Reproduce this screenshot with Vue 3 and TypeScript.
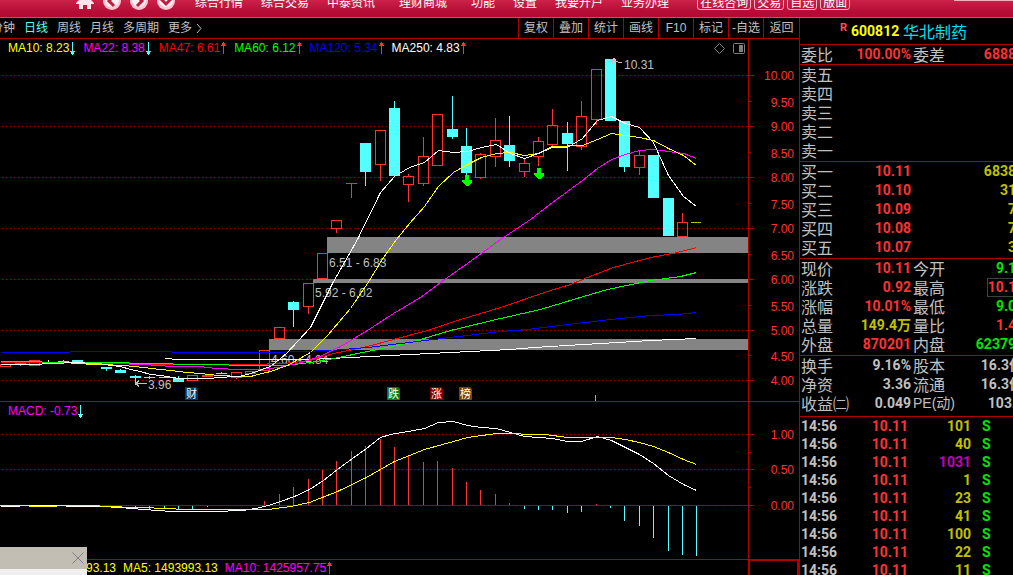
<script setup lang="ts">
type Kind = 'up' | 'down' | 'solid' | 'white'
// left edge, body top, body bottom, high, low, kind
type Candle = [number, number, number, number, number, Kind]

const navItems = [
  { text: '综合行情', wide: false },
  { text: '综合交易', wide: false },
  { text: '中泰资讯', wide: false },
  { text: '理财商城', wide: true },
  { text: '功能', wide: false },
  { text: '设置', wide: false },
  { text: '我要开户', wide: false },
  { text: '业务办理', wide: false },
]
const quickItems = ['在线咨询', '交易', '自选', '版面']
const periods = ['分钟', '日线', '周线', '月线', '多周期', '更多']
const tools = ['复权', '叠加', '统计', '画线', 'F10', '标记', '-自选', '返回']

const averages = [
  { text: 'MA10: 8.23', tone: 'yellow', up: false },
  { text: 'MA22: 8.38', tone: 'magenta', up: false },
  { text: 'MA47: 6.61', tone: 'red', up: true },
  { text: 'MA60: 6.12', tone: 'green', up: true },
  { text: 'MA120: 5.34', tone: 'blue', up: true },
  { text: 'MA250: 4.83', tone: 'white', up: true },
]

const candles: Candle[] = [
  [0, 364, 366, 364, 366, 'up'],
  [15, 363, 363, 362, 365, 'up'],
  [29, 360, 365, 360, 365, 'up'],
  [43, 363, 363, 360, 363, 'white'],
  [58, 361, 361, 360, 361, 'down'],
  [72, 360, 361, 360, 361, 'down'],
  [87, 364, 364, 364, 364, 'down'],
  [101, 367, 368, 367, 370, 'down'],
  [115, 370, 372, 369, 372, 'down'],
  [130, 376, 377, 375, 384, 'down'],
  [144, 377, 377, 376, 378, 'down'],
  [159, 377, 377, 377, 377, 'down'],
  [173, 378, 381, 376, 381, 'down'],
  [187, 375, 380, 375, 380, 'up'],
  [202, 375, 376, 375, 376, 'solid'],
  [216, 373, 373, 372, 373, 'down'],
  [231, 372, 377, 372, 378, 'up'],
  [245, 371, 373, 371, 373, 'up'],
  [259, 350, 370, 350, 370, 'up'],
  [274, 327, 338, 327, 338, 'up'],
  [288, 302, 309, 301, 326, 'down'],
  [303, 283, 306, 283, 313, 'up'],
  [317, 253, 278, 253, 278, 'up'],
  [331, 220, 228, 220, 232, 'up'],
  [346, 183, 183, 183, 197, 'up'],
  [360, 143, 171, 143, 185, 'down'],
  [375, 130, 164, 130, 180, 'up'],
  [389, 108, 175, 101, 176, 'down'],
  [403, 176, 184, 174, 201, 'up'],
  [418, 156, 183, 137, 185, 'up'],
  [432, 114, 165, 114, 165, 'up'],
  [447, 129, 136, 96, 138, 'down'],
  [461, 146, 172, 128, 175, 'down'],
  [475, 154, 177, 153, 178, 'up'],
  [490, 140, 156, 118, 166, 'up'],
  [504, 145, 160, 116, 166, 'down'],
  [519, 163, 171, 158, 176, 'up'],
  [533, 141, 156, 137, 165, 'up'],
  [547, 125, 144, 109, 147, 'up'],
  [562, 133, 143, 122, 170, 'down'],
  [576, 116, 146, 101, 149, 'up'],
  [591, 69, 119, 69, 124, 'up'],
  [605, 59, 120, 59, 120, 'down'],
  [619, 121, 166, 121, 171, 'down'],
  [634, 155, 167, 150, 174, 'up'],
  [648, 155, 197, 155, 197, 'down'],
  [663, 198, 235, 198, 235, 'down'],
  [677, 222, 236, 213, 236, 'up'],
]

const priceLines = [
  { tone: 'white', points: '164,358 171,358 172,359 300,359 330,358 510,349 533,347 617,342 650,340 696,338' },
  { tone: 'red', points: '0,362 41,362 140,363 143,364 250,364 283,363 310,360 333,353 367,346 393,339 427,330 457,320 500,307 550,290 570,284 587,277 613,267 650,257 677,252 696,247' },
  { tone: 'green', points: '0,361 41,361 42,362 128,362 129,363 172,363 173,364 228,364 229,365 285,365 310,362 333,358 367,351 410,342 450,330 500,318 540,309 573,299 607,289 650,280 680,276 696,272' },
  { tone: 'blue', points: '0,352 69,352 70,351 171,351 172,352 270,352 330,350 367,347 433,339 483,333 500,331 527,329 550,326 610,319 650,315 677,314 696,312' },
  { tone: 'magenta', points: '128,364 143,364 172,366 200,366 215,368 240,369 259,369 278,367 297,363 317,357 340,346 367,330 393,313 420,297 440,282 467,263 500,239 530,219 552,202 582,180 597,168 611,159 625,154 639,150 653,149 668,151 683,153 696,158' },
  { tone: 'yellow', points: '71,363 100,364 124,365 143,367 160,369 170,370 186,372 200,373 218,375 240,376 250,376 270,371 287,365 310,352 327,335 350,308 367,283 383,257 396,239 409,223 424,206 438,186 453,172 467,164 481,157 496,153 510,152 524,155 538,153 552,146 582,145 597,139 611,133 639,137 653,140 668,148 683,155 696,165' },
  { tone: 'white', points: '0,364 41,364 42,363 56,363 71,362 98,363 110,365 120,366 130,369 140,371 150,374 160,375 172,377 178,378 212,378 215,377 238,376 243,375 250,373 270,366 286,353 310,327 332,283 357,239 380,192 394,176 409,167 424,162 438,150 453,152 467,151 481,147 496,144 510,153 524,158 538,153 552,147 567,147 582,138 597,120 611,116 625,123 639,127 653,142 668,175 683,196 696,206' },
]

const priceScale = [
  ['10.00', 75], ['9.50', 102], ['9.00', 126], ['8.50', 153], ['8.00', 177], ['7.50', 204], ['7.00', 228],
  ['6.50', 255], ['6.00', 279], ['5.50', 306], ['5.00', 330], ['4.50', 356], ['4.00', 380],
] as [string, number][]
const priceGrid = [75, 126, 177, 228, 279, 330, 380]
const priceMinor = [101, 152, 203, 254, 305, 355]

const badges = [
  { text: '财', x: 185, fill: '#003466' },
  { text: '跌', x: 387, fill: '#008000' },
  { text: '涨', x: 430, fill: '#800000' },
  { text: '榜', x: 459, fill: '#804000' },
]

const macdLines = [
  { tone: 'white', points: '0,506 12,506 28,505 100,506 120,507 143,509 172,511 213,511 243,510 255,508 268,505 280,501 294,496 309,489 323,480 337,469 352,458 366,448 380,437 390,434 408,431 424,428 438,422 453,421 467,425 481,427 496,428 510,432 524,436 552,438 567,441 581,441 597,436 611,440 625,447 639,454 653,463 668,475 683,484 696,490' },
  { tone: 'yellow', points: '0,505 56,506 57,505 99,505 100,506 143,507 186,509 268,509 290,506 309,502 337,491 366,477 380,469 394,461 424,449 453,441 467,437 496,433 545,434 567,437 611,437 625,439 639,442 653,446 668,452 683,459 696,464' },
]
const macdUp: [number, number][] = [
  [264, 501], [279, 494], [293, 487], [308, 479], [322, 470], [336, 461], [351, 451], [365, 446], [380, 439],
  [394, 447], [408, 456], [423, 462], [437, 461], [452, 468], [466, 482], [480, 490], [495, 494], [509, 503], [596, 504],
]
const macdDown: [number, number][] = [
  [120, 507], [135, 508], [149, 509], [164, 509], [178, 510], [192, 509], [207, 507], [221, 506],
  [524, 509], [538, 510], [552, 510], [567, 513], [581, 512], [610, 508], [624, 521], [639, 526], [653, 538],
  [668, 551], [682, 555], [696, 556],
]

const sells = ['卖五', '卖四', '卖三', '卖二', '卖一']
const buys = [
  ['买一', '10.11', '6838'],
  ['买二', '10.10', '31'],
  ['买三', '10.09', '7'],
  ['买四', '10.08', '7'],
  ['买五', '10.07', '3'],
]
const quotes = [
  { a: '现价', av: '10.11', at: 'up', b: '今开', bv: '9.1', bt: 'down' },
  { a: '涨跌', av: '0.92', at: 'up', b: '最高', bv: '10.1', bt: 'up boxed' },
  { a: '涨幅', av: '10.01%', at: 'up', b: '最低', bv: '9.0', bt: 'down' },
  { a: '总量', av: '149.4万', at: 'vol', b: '量比', bv: '1.4', bt: 'up' },
  { a: '外盘', av: '870201', at: 'up', b: '内盘', bv: '62379', bt: 'down' },
]
const basics = [
  { a: '换手', av: '9.16%', b: '股本', bv: '16.3亿', bt: 'spill', latin: false },
  { a: '净资', av: '3.36', b: '流通', bv: '16.3亿', bt: 'spill', latin: false },
  { a: '收益㈡', av: '0.049', b: 'PE(动)', bv: '103.', bt: '', latin: true },
]
const deals = ['101', '40', '1031', '1', '23', '41', '100', '22', '11']
</script>

<template>
  <div class="app">
    <header class="top">
      <div class="icons">
        <button class="icon" aria-label="主页">
          <svg width="18" height="20" viewBox="0 0 18 20">
            <path d="M9 5 L18 14 V15 H15 V20 H11 V16 H7 V20 H3 V15 H0 V14 Z" fill="#ffe4ea" />
          </svg>
        </button>
        <button class="icon" aria-label="后退">
          <svg width="18" height="18" viewBox="0 0 18 18">
            <circle cx="9" cy="9" r="9" fill="#ffc4d0" /><circle cx="9" cy="8" r="7" fill="#fff0f3" />
            <path d="M11 4 L6 9 L11 14" fill="none" stroke="#c01c42" stroke-width="3" />
          </svg>
        </button>
        <button class="icon" aria-label="前进">
          <svg width="18" height="18" viewBox="0 0 18 18">
            <circle cx="9" cy="9" r="9" fill="#ffc4d0" /><circle cx="9" cy="8" r="7" fill="#fff0f3" />
            <path d="M7 4 L12 9 L7 14" fill="none" stroke="#c01c42" stroke-width="3" />
          </svg>
        </button>
        <button class="icon" aria-label="展开">
          <svg width="18" height="18" viewBox="0 0 18 18">
            <circle cx="9" cy="9" r="9" fill="#ffc4d0" /><circle cx="9" cy="8" r="7" fill="#fff0f3" />
            <path d="M4 7 L9 12 L14 7" fill="none" stroke="#c01c42" stroke-width="3" />
          </svg>
        </button>
      </div>
      <nav class="nav">
        <a v-for="n in navItems" :key="n.text" href="#" :class="{ wide: n.wide }">{{ n.text }}</a>
      </nav>
      <div class="quick">
        <button v-for="q in quickItems" :key="q">{{ q }}</button>
      </div>
      <div class="strip"></div>
    </header>

    <main class="body">
      <section class="left">
        <div class="toolbar">
          <div class="periods">
            <button v-for="(p, i) in periods" :key="p" :class="{ active: i === 1 }">
              {{ p }}<svg v-if="i === 5" class="more" width="7" height="9" viewBox="0 0 7 9"><path d="M1 0 L5 4.500 L1 9" fill="none" stroke="#c0c0c0" /></svg>
            </button>
          </div>
          <div class="tools">
            <button v-for="t in tools" :key="t">{{ t }}</button>
          </div>
        </div>

        <div class="row">
          <div class="legend">
            <span v-for="m in averages" :key="m.text" :class="['entry', 't-' + m.tone]">
              {{ m.text }}
              <svg class="arrow" width="6" height="13" viewBox="0 0 6 13" shape-rendering="crispEdges">
                <path v-if="m.up" d="M2 0h1v1h1v2h1v1h-2v8h-1v-8h-2v-1h1v-2h1z" fill="#ff3232" />
                <path v-else d="M2 0h1v9h2v1h-1v2h-1v1h-1v-1h-1v-2h-1v-1h2z" fill="#54ffff" />
              </svg>
            </span>
          </div>
          <svg class="marks" width="35" height="13" viewBox="0 0 35 13">
            <path d="M6.500 1.500 L11.500 6.500 L6.500 11.500 L1.500 6.500 Z" fill="none" stroke="#808080" />
            <rect x="20.500" y="1.500" width="11" height="10" rx="1" fill="none" stroke="#808080" />
            <rect x="26" y="3" width="4" height="7" fill="#808080" />
          </svg>
          <div class="stub"></div>
        </div>

        <svg class="chart" viewBox="0 57 799 345" role="img" aria-label="日线">
          <g shape-rendering="crispEdges">
            <path v-for="y in priceGrid" :key="y" :d="`M2 ${y + 0.5}H748`" stroke="#b00000" stroke-dasharray="1 3" />
            <path v-for="y in priceGrid" :key="'t' + y" :d="`M749 ${y + 0.5}h5`" stroke="#b00000" />
            <path v-for="y in priceMinor" :key="y" :d="`M749 ${y + 0.5}h2`" stroke="#b00000" />
            <path d="M748.500 57V402M0 401.500H799" stroke="#b00000" />
            <rect x="327" y="237" width="421" height="16" fill="#848484" />
            <rect x="313" y="279" width="435" height="4" fill="#848484" />
            <rect x="269" y="339" width="479" height="11" fill="#848484" />
          </g>
          <g class="note">
            <text x="329" y="267">6.51 - 6.83</text>
            <text x="315" y="297">5.92 - 6.02</text>
            <text x="271" y="364">4.60 - 4.84</text>
            <text x="148" y="389">3.96</text>
            <text x="624" y="69">10.31</text>
          </g>
          <g shape-rendering="crispEdges">
            <template v-for="c in candles" :key="c[0]">
              <g v-if="c[5] === 'up'" stroke="#ff3232" fill="none">
                <path :d="`M${c[0] + 5.5} ${c[3]}V${c[1]}M${c[0] + 5.5} ${c[2]}V${c[4] + 1}`" />
                <rect v-if="c[2] > c[1]" :x="c[0] + 0.5" :y="c[1] + 0.5" width="10" :height="c[2] - c[1]" />
                <path v-else :d="`M${c[0]} ${c[1] + 0.5}h11`" />
              </g>
              <g v-else :fill="c[5] === 'down' ? '#54ffff' : c[5] === 'solid' ? '#ff3232' : '#ffffff'">
                <rect :x="c[0]" :y="c[1]" width="11" :height="c[2] - c[1] + 1" />
                <rect :x="c[0] + 5" :y="c[3]" width="1" :height="c[4] - c[3] + 1" />
              </g>
            </template>
            <path d="M691 222.500h10" stroke="#c0c000" />
            <path d="M595.500 395v6" stroke="#c0c000" />
            <g transform="translate(0.500 0.500)" fill="none">
              <polyline v-for="(l, i) in priceLines" :key="i" :points="l.points" :class="'s-' + l.tone" />
            </g>
            <path d="M465 175h4v5h3v2l-4 4h-2l-4 -4v-2h3z" fill="#00ff00" />
            <path d="M537 168h4v5h3v2l-4 4h-2l-4 -4v-2h3z" fill="#00ff00" />
            <path d="M135 383.500h12M139 380.500l-3 3l3 3M611 60l11 3M615 58.500l-4 1l2 4" fill="none" stroke="#c0c0c0" />
          </g>
          <g v-for="b in badges" :key="b.text" class="badge">
            <path :d="`M${b.x} 387h11l2 2v11h-13z`" :fill="b.fill" />
            <text :x="b.x + 1" y="398">{{ b.text }}</text>
          </g>
          <g class="scale">
            <text v-for="s in priceScale" :key="s[0]" x="794" :y="s[1] + 5">{{ s[0] }}</text>
          </g>
        </svg>

        <div class="row">
          <div class="legend">
            <span class="entry t-magenta">MACD: -0.73
              <svg class="arrow" width="6" height="13" viewBox="0 0 6 13" shape-rendering="crispEdges">
                <path d="M2 0h1v9h2v1h-1v2h-1v1h-1v-1h-1v-2h-1v-1h2z" fill="#54ffff" />
              </svg>
            </span>
          </div>
          <div class="stub"></div>
        </div>

        <svg class="chart" viewBox="0 420 799 140" role="img" aria-label="MACD">
          <g shape-rendering="crispEdges">
            <path d="M2 434.500H748M2 469.500H748" stroke="#b00000" stroke-dasharray="1 3" />
            <path d="M0 505.500H748" stroke="#b00000" stroke-dasharray="1 1" />
            <path d="M749 434.500h5M749 469.500h5M749 505.500h5M749 452.500h2M749 487.500h2" stroke="#b00000" />
            <path d="M748.500 420V560M0 559.500H799" stroke="#b00000" />
            <path v-for="b in macdUp" :key="b[0]" :d="`M${b[0] + 0.5} ${b[1]}V505`" stroke="#ff3232" />
            <path v-for="b in macdDown" :key="b[0]" :d="`M${b[0] + 0.5} 506V${b[1]}`" stroke="#54ffff" />
            <g transform="translate(0.500 0.500)" fill="none">
              <polyline v-for="l in macdLines" :key="l.tone" :points="l.points" :class="'s-' + l.tone" />
            </g>
          </g>
          <g class="scale">
            <text x="794" y="439">1.00</text>
            <text x="794" y="474">0.50</text>
            <text x="794" y="510">0.00</text>
          </g>
        </svg>

        <div class="row last">
          <div class="volume">
            <span class="t-yellow">93.13</span>
            <span class="t-yellow">MA5: 1493993.13</span>
            <span class="entry t-magenta">MA10: 1425957.75
              <svg class="arrow" width="6" height="13" viewBox="0 0 6 13" shape-rendering="crispEdges">
                <path d="M2 0h1v1h1v2h1v1h-2v8h-1v-8h-2v-1h1v-2h1z" fill="#ff3232" />
              </svg>
            </span>
          </div>
          <div class="stub box"></div>
        </div>

        <div class="popup">
          <button aria-label="关闭">
            <svg width="12" height="12" viewBox="0 0 12 12"><path d="M0.500 0.500L11.500 11.500M11.500 0.500L0.500 11.500" stroke="#808080" /></svg>
          </button>
        </div>
      </section>

      <aside class="panel">
        <h1 class="title"><sup>R</sup><b>600812</b><span>华北制药</span></h1>
        <table class="quote">
          <colgroup><col class="c1" /><col class="c2" /><col class="c3" /><col /></colgroup>
          <tbody class="single">
            <tr><th>委比</th><td class="up">100.00%</td><th>委差</th><td class="up">6888</td></tr>
          </tbody>
        </table>
        <table class="quote">
          <colgroup><col class="c1" /><col class="c2" /><col class="c3" /><col /></colgroup>
          <tbody>
            <tr v-for="s in sells" :key="s"><th>{{ s }}</th><td></td><td></td><td></td></tr>
          </tbody>
        </table>
        <table class="quote">
          <colgroup><col class="c1" /><col class="c2" /><col class="c3" /><col /></colgroup>
          <tbody>
            <tr v-for="b in buys" :key="b[0]"><th>{{ b[0] }}</th><td class="up">{{ b[1] }}</td><td></td><td class="vol">{{ b[2] }}</td></tr>
          </tbody>
        </table>
        <table class="quote">
          <colgroup><col class="c1" /><col class="c2" /><col class="c3" /><col /></colgroup>
          <tbody>
            <tr v-for="q in quotes" :key="q.a">
              <th>{{ q.a }}</th><td :class="q.at">{{ q.av }}</td><th>{{ q.b }}</th><td :class="q.bt"><span>{{ q.bv }}</span></td>
            </tr>
          </tbody>
        </table>
        <table class="quote basics">
          <colgroup><col class="c1" /><col class="c2" /><col class="c3" /><col /></colgroup>
          <tbody>
            <tr v-for="q in basics" :key="q.a">
              <th>{{ q.a }}</th><td>{{ q.av }}</td><th :class="{ latin: q.latin }">{{ q.b }}</th><td :class="q.bt"><span>{{ q.bv }}</span></td>
            </tr>
          </tbody>
        </table>
        <table class="deals">
          <colgroup><col class="c1" /><col class="d2" /><col class="d3" /><col /></colgroup>
          <tbody>
            <tr v-for="(d, i) in deals" :key="i">
              <td class="time">14:56</td><td class="up">10.11</td><td :class="d === '1031' ? 'big' : 'vol'">{{ d }}</td><td class="side">S</td>
            </tr>
          </tbody>
        </table>
      </aside>
    </main>
  </div>
</template>

<style>
body {
  margin: 0;
  background: #000;
}
</style>

<style scoped>
.app {
  height: 100vh;
  overflow: hidden;
  display: flex;
  flex-direction: column;
  background: #000;
  color: #c0c0c0;
  font: 12px/14px "Liberation Sans", "Noto Sans CJK SC", sans-serif;
}
button {
  margin: 0;
  padding: 0;
  border: 0;
  background: none;
  color: inherit;
  font: inherit;
  white-space: nowrap;
}
a {
  color: inherit;
  text-decoration: none;
}
svg {
  display: block;
}
.top {
  box-sizing: border-box;
  flex: none;
  height: 18px;
  overflow: hidden;
  display: flex;
  align-items: flex-end;
  border-bottom: 1px solid #7c7070;
  background: linear-gradient(#cc2149, #b50c35 70%, #b30b34);
  color: #fff;
}
.icons {
  display: flex;
  align-items: flex-end;
  gap: 9px;
  padding: 0 0 7px 76px;
}
.icons .icon:first-child {
  padding-bottom: 1px;
}
.nav {
  display: flex;
  gap: 18px;
  padding: 0 0 7px 20px;
  white-space: nowrap;
}
.nav .wide {
  padding: 0 6px;
}
.quick {
  display: flex;
  gap: 3px;
  padding: 0 0 7px 28px;
}
.quick button {
  height: 20px;
  padding: 5px 2px 0;
  border: 1px solid #ffb4c4;
  border-radius: 3px;
  line-height: 14px;
}
.strip {
  align-self: flex-start;
  width: 59px;
  height: 1px;
  margin-left: auto;
  background: #f0b0bc;
}
.body {
  flex: 1;
  min-height: 0;
  display: grid;
  grid-template-columns: minmax(0, 1fr) 214px;
}
.left {
  position: relative;
  min-width: 0;
  overflow: hidden;
  display: flex;
  flex-direction: column;
}
.toolbar {
  flex: none;
  display: flex;
  justify-content: space-between;
  height: 20px;
  border-bottom: 1px solid #b00000;
}
.periods {
  display: flex;
  align-items: center;
  gap: 9px;
  margin-left: -9px;
}
.periods button {
  display: flex;
  align-items: center;
}
.periods .active {
  color: #54ffff;
}
.more {
  margin-left: 4px;
}
.tools {
  display: flex;
}
.tools button {
  box-sizing: border-box;
  width: 35px;
  border-left: 1px solid #b00000;
}
.tools button:last-child {
  width: 36px;
}
.row {
  flex: none;
  display: flex;
  align-items: center;
  height: 18px;
}
.legend {
  flex: 1;
  display: flex;
  gap: 7px;
  padding-left: 8px;
  white-space: nowrap;
}
.entry {
  display: flex;
  align-items: center;
  gap: 1px;
}
.marks {
  flex: none;
}
.stub {
  box-sizing: border-box;
  flex: none;
  align-self: stretch;
  width: 51px;
  border-left: 1px solid #b00000;
}
.chart {
  flex: none;
  width: 100%;
  height: auto;
}
.chart text {
  font: 12px "Liberation Sans", "Noto Sans CJK SC", sans-serif;
}
.note {
  fill: #c0c0c0;
}
.scale {
  fill: #ff3232;
  text-anchor: end;
}
.badge text {
  fill: #fff;
  font-size: 11px;
}
.last {
  flex: 1;
  align-items: flex-start;
}
.volume {
  flex: 1;
  display: flex;
  gap: 7px;
  padding: 1px 0 0 86px;
  white-space: nowrap;
}
.box {
  border: 2px solid #b00000;
  border-top-width: 1px;
  border-bottom: 0;
}
.popup {
  position: absolute;
  left: 0;
  bottom: 0;
  box-sizing: border-box;
  width: 87px;
  height: 28px;
  display: flex;
  justify-content: flex-end;
  align-items: flex-start;
  padding: 5px 3px 0 0;
  background: linear-gradient(#c3beb3 22px, #f0f0f0 22px);
}
.t-yellow { color: #ffff00; }
.t-magenta { color: #ff00ff; }
.t-red { color: #ff0000; }
.t-green { color: #00ff00; }
.t-blue { color: #0000ff; }
.t-white { color: #ffffff; }
.s-yellow { stroke: #ffff00; }
.s-magenta { stroke: #ff00ff; }
.s-red { stroke: #ff0000; }
.s-green { stroke: #00ff00; }
.s-blue { stroke: #0000ff; }
.s-white { stroke: #ffffff; }

.panel {
  min-width: 0;
  overflow: hidden;
  border-left: 1px solid #b00000;
}
.title {
  display: flex;
  align-items: center;
  height: 26px;
  margin: 0;
  padding-left: 40px;
  border-bottom: 1px solid #b00000;
  font: 16px/20px "Noto Sans CJK SC", sans-serif;
  white-space: nowrap;
}
.title sup {
  align-self: flex-start;
  width: 11px;
  padding-top: 4px;
  color: #ff5050;
  font: bold 11px/12px Roboto, sans-serif;
}
.title b {
  width: 52px;
  color: #ffff00;
  font: bold 14px/20px Roboto, sans-serif;
}
.title span {
  color: #00e0f0;
}
table {
  width: calc(100% + 3px);
  table-layout: fixed;
  border-collapse: separate;
  border-spacing: 0;
}
.quote {
  height: 97px;
  padding-bottom: 1px;
  border-bottom: 1px solid #b00000;
}
.quote:has(.single) {
  height: 20px;
  padding-bottom: 0;
}
.basics {
  height: 61px;
  padding-bottom: 3px;
}
.c1 { width: 38px; }
.c2 { width: 73px; }
.c3 { width: 40px; }
.d2 { width: 70px; }
.d3 { width: 63px; }
th,
td {
  height: 19px;
  padding: 0;
  line-height: 19px;
  white-space: nowrap;
}
th {
  text-align: left;
  font-family: "Noto Sans CJK SC", sans-serif;
  font-size: 16px;
  font-weight: normal;
  padding-left: 1px;
}
td + th {
  padding-left: 2px;
}
th.latin {
  font-family: "Liberation Sans", "Noto Sans CJK SC", sans-serif;
  font-size: 14px;
}
td {
  text-align: right;
  font-family: Roboto, "Noto Sans CJK SC", sans-serif;
  font-size: 14px;
  font-weight: bold;
}
.spill span {
  margin-right: -7px;
}
.boxed span {
  display: inline-block;
  box-sizing: border-box;
  height: 19px;
  line-height: 17px;
  vertical-align: top;
  border: 1px solid #404040;
  border-right: 0;
}
.deals td {
  height: 18px;
  line-height: 18px;
}
.deals .time {
  text-align: left;
  padding-left: 1px;
}
.deals .side {
  text-align: left;
  padding-left: 11px;
}
.up { color: #ff3232; }
.down,
.side { color: #00e600; }
.vol { color: #c0c000; }
.big { color: #c000c0; }
</style>
